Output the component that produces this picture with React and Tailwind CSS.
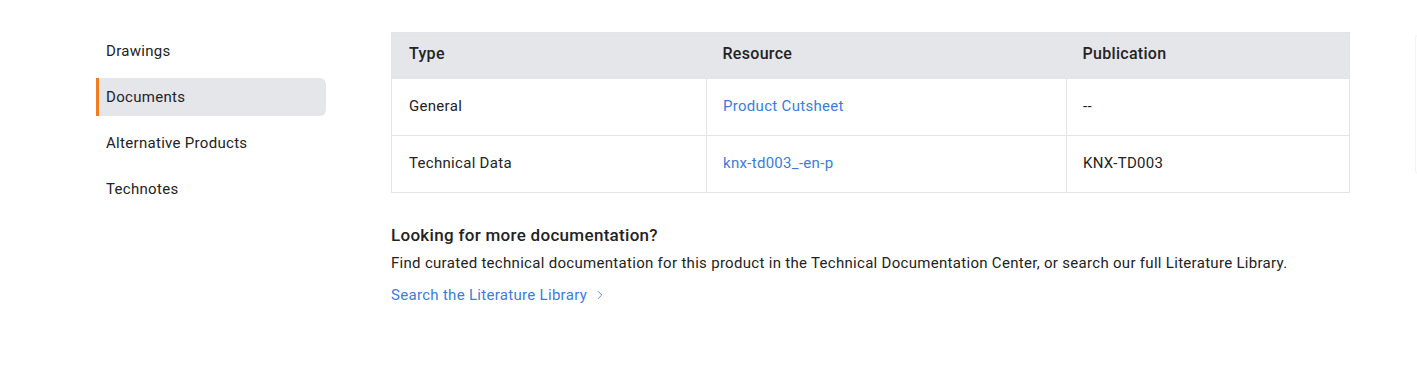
import { ChevronRight } from 'lucide-react';

const navItems = ['Drawings', 'Documents', 'Alternative Products', 'Technotes'];

const rows = [
    { type: 'General', resource: 'Product Cutsheet', publication: '--' },
    { type: 'Technical Data', resource: 'knx-td003_-en-p', publication: 'KNX-TD003' },
];

export default function App() {
    return (
        <div className="w-[1417px] h-[366px] bg-white overflow-hidden font-['Roboto','Liberation_Sans',sans-serif] tracking-[0.3px] text-[#232323]">
            <div className="flex pt-8">
                {/* Sidebar */}
                <nav className="w-[230px] shrink-0 ml-[96px] flex flex-col gap-2">
                    {navItems.map(item => (
                        <div
                            key={item}
                            className={
                                item === 'Documents'
                                    ? 'h-[38px] flex items-center pl-[7px] border-l-[3px] border-[#f47b20] bg-[#e5e6ea] rounded-r-md text-[15px]'
                                    : 'h-[38px] flex items-center pl-[10px] text-[15px]'
                            }
                        >
                            {item}
                        </div>
                    ))}
                </nav>

                {/* Main */}
                <main className="ml-[65px] w-[959px] shrink-0">
                    <table className="w-full border-collapse border border-[#e3e4e8] text-[15px]">
                        <thead>
                            <tr className="bg-[#e5e6ea] h-[46px] text-left">
                                <th className="w-[315px] pl-[17px] pb-[3px] font-medium text-[16px]">Type</th>
                                <th className="w-[360px] pl-[16px] pb-[3px] font-medium text-[16px]">Resource</th>
                                <th className="pl-[16px] pb-[3px] font-medium text-[16px]">Publication</th>
                            </tr>
                        </thead>
                        <tbody>
                            {rows.map(r => (
                                <tr key={r.type} className="h-[57px] border-t border-[#e3e4e8]">
                                    <td className="pl-[17px] pb-[1px]">{r.type}</td>
                                    <td className="pl-[16px] pb-[1px] border-l border-[#e3e4e8]">
                                        <a className="text-[#3b7dd8]" href="#">{r.resource}</a>
                                    </td>
                                    <td className="pl-[16px] pb-[1px] border-l border-[#e3e4e8]">{r.publication}</td>
                                </tr>
                            ))}
                        </tbody>
                    </table>

                    <div className="mt-[30px]">
                        <h3 className="text-[17px] font-medium leading-6">Looking for more documentation?</h3>
                        <p className="text-[15px] mt-[4px] leading-6">
                            Find curated technical documentation for this product in the Technical Documentation Center, or search our full Literature Library.
                        </p>
                        <a href="#" className="mt-[9px] inline-flex items-center gap-[6px] text-[15px] text-[#3b7dd8]">
                            Search the Literature Library
                            <ChevronRight className="w-[14px] h-[14px]" strokeWidth={1.5} />
                        </a>
                    </div>
                </main>

                <div className="ml-[65px] w-[40px] h-[143px] mt-[1px] border border-[#f3f3f3] rounded-md shrink-0" />
            </div>
        </div>
    );
}
